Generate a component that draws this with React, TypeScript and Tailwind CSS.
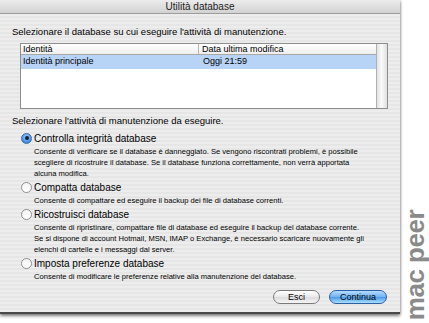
import React from "react";

const options = [
  {
    label: "Controlla integrità database",
    desc: [
      "Consente di verificare se il database è danneggiato. Se vengono riscontrati problemi, è possibile",
      "scegliere di ricostruire il database. Se il database funziona correttamente, non verrà apportata",
      "alcuna modifica.",
    ],
    checked: true,
  },
  {
    label: "Compatta database",
    desc: ["Consente di compattare ed eseguire il backup dei file di database correnti."],
    checked: false,
  },
  {
    label: "Ricostruisci database",
    desc: [
      "Consente di ripristinare, compattare file di database ed eseguire il backup del database corrente.",
      "Se si dispone di account Hotmail, MSN, IMAP o Exchange, è necessario scaricare nuovamente gli",
      "elenchi di cartelle e i messaggi dal server.",
    ],
    checked: false,
  },
  {
    label: "Imposta preferenze database",
    desc: ["Consente di modificare le preferenze relative alla manutenzione del database."],
    checked: false,
  },
];

const Radio = ({ checked }: { checked: boolean }) =>
  checked ? (
    <div className="w-[11px] h-[11px] rounded-full border border-[#3a6bb0] bg-[radial-gradient(circle_at_50%_35%,#a9d3ff,#3f88dd_70%)] flex items-center justify-center shrink-0">
      <div className="w-[4px] h-[4px] rounded-full bg-[#0c1f3f]" />
    </div>
  ) : (
    <div className="w-[11px] h-[11px] rounded-full border border-[#8f8f8f] bg-[linear-gradient(#f4f4f4,#ffffff)] shrink-0" />
  );

const Option = ({ label, desc, checked }: { label: string; desc: string[]; checked: boolean }) => (
  <div className="flex flex-col">
    <div className="flex items-center gap-[2px] h-[14px]">
      <Radio checked={checked} />
      <span className="text-[10px] text-black">{label}</span>
    </div>
    <div className="pl-[13px] mt-[1px] flex flex-col">
      {desc.map((d) => (
        <span key={d} className="text-[7.6px] leading-[11px] text-black whitespace-nowrap">
          {d}
        </span>
      ))}
    </div>
  </div>
);

export default function App() {
  return (
    <div className="w-[429px] h-[323px] bg-white flex overflow-hidden font-['Liberation_Sans',Arial,sans-serif]">
      {/* Window */}
      <div className="w-[400px] h-[314px] flex flex-col border-b-[2px] border-[#4a4a4a] shadow-[0_2px_3px_rgba(0,0,0,0.5),1px_0_2px_rgba(0,0,0,0.15)]">
        <div className="h-[14px] shrink-0 flex items-center justify-center bg-[linear-gradient(#ececec,#d2d2d2)] border-b border-[#9c9c9c]">
          <span className="text-[10px] text-[#222]">Utilità database</span>
        </div>

        <div className="flex-1 flex flex-col px-[12px] bg-[repeating-linear-gradient(#ededed_0px,#ededed_2px,#e6e6e6_2px,#e6e6e6_4px)]">
          <p className="mt-[12px] text-[9.5px] leading-[12px] text-black">
            Selezionare il database su cui eseguire l'attività di manutenzione.
          </p>

          {/* Table */}
          <div className="mt-[5px] ml-[8px] w-[368px] h-[66px] border border-[#8e8e8e] bg-white flex">
            <div className="flex-1 flex flex-col">
              <div className="h-[11px] flex border-b border-[#a8a8a8] bg-[linear-gradient(#ffffff,#eeeeee)] text-[9px] leading-[11px]">
                <div className="w-[178px] pl-[2px] border-r border-[#b5b5b5]">Identità</div>
                <div className="pl-[3px]">Data ultima modifica</div>
              </div>
              <div className="h-[14px] flex items-center bg-[#b7d3f5] text-[9px]">
                <div className="w-[179px] pl-[2px]">Identità principale</div>
                <div className="pl-[3px]">Oggi 21:59</div>
              </div>
            </div>
            <div className="w-[11px] border-l border-[#b0b0b0] bg-[linear-gradient(90deg,#e2e2e2,#fafafa_45%,#e0e0e0)]" />
          </div>

          <p className="mt-[6px] text-[9.5px] leading-[12px] text-black">
            Selezionare l'attività di manutenzione da eseguire.
          </p>

          <div className="mt-[4px] ml-[9px] flex flex-col gap-[1px]">
            {options.map((o) => (
              <Option key={o.label} {...o} />
            ))}
          </div>

          <div className="mt-auto mb-[8px] flex justify-end gap-[9px] pr-[1px]">
            <button className="w-[47px] h-[14px] rounded-full border border-[#7a7a7a] bg-[linear-gradient(#ffffff,#e9e9e9_50%,#dcdcdc_51%,#f5f5f5)] text-[9px] leading-[12px] text-black">
              Esci
            </button>
            <button className="w-[58px] h-[14px] rounded-full border border-[#2d5ea8] bg-[linear-gradient(#b6dcff,#6fb2f2_50%,#4b97ea_51%,#a8e0ff)] text-[9px] leading-[12px] text-black">
              Continua
            </button>
          </div>
        </div>
      </div>

      {/* Watermark */}
      <div className="flex-1 flex items-end justify-center pb-[3px]">
        <span className="[writing-mode:vertical-rl] rotate-180 text-[26px] leading-[24px] font-bold text-[#8a8a8a] tracking-[-0.5px]">
          mac peer
        </span>
      </div>
    </div>
  );
}
